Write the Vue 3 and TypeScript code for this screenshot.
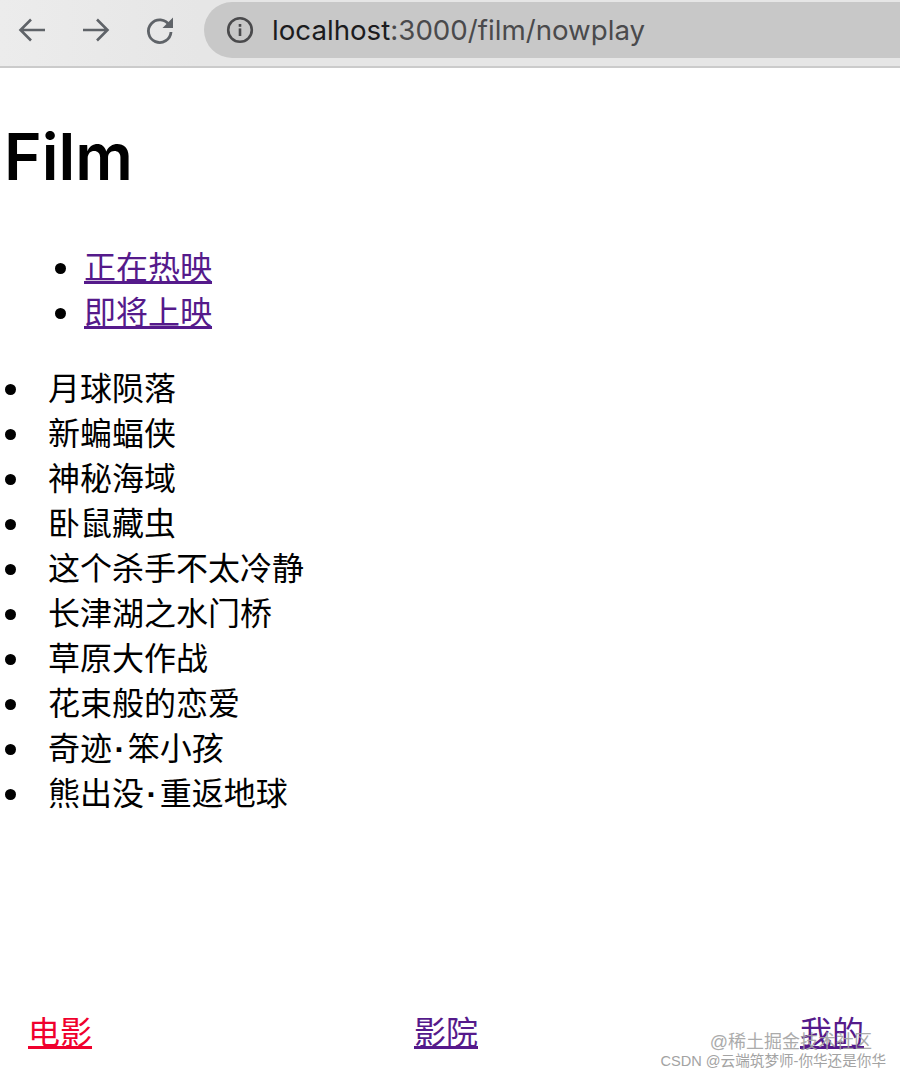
<script setup lang="ts">
const tabs: string[] = ['正在热映', '即将上映']
const films: string[][] = ['月球陨落', '新蝙蝠侠', '神秘海域', '卧鼠藏虫', '这个杀手不太冷静', '长津湖之水门桥', '草原大作战', '花束般的恋爱', '奇迹·笨小孩', '熊出没·重返地球'].map((f) => f.split(/(·)/))
const navs: { label: string; active: boolean }[] = [
  { label: '电影', active: true },
  { label: '影院', active: false },
  { label: '我的', active: false },
]
</script>

<template>
  <div class="page">
    <header class="chrome">
      <svg class="ico" width="32" height="32" viewBox="0 0 32 32"><path d="M29 16H5M15 5.500 4.500 16 15 26.500" fill="none" stroke="#5f6368" stroke-width="2.600"/></svg>
      <svg class="ico fwd" width="32" height="32" viewBox="0 0 32 32"><path d="M3 16h24M17 5.500 27.500 16 17 26.500" fill="none" stroke="#5f6368" stroke-width="2.600"/></svg>
      <svg class="ico rel" width="32" height="32" viewBox="0 0 32 32"><path d="M25.500 11.500A11.300 11.300 0 1 0 27 18" fill="none" stroke="#5f6368" stroke-width="2.800"/><path d="M29 3.500V14H18.500z" fill="#5f6368"/></svg>
      <div class="omni">
        <svg width="28" height="28" viewBox="0 0 28 28"><circle cx="14" cy="14" r="11.800" fill="none" stroke="#4a4a4c" stroke-width="2.600"/><rect x="12.700" y="12.400" width="2.600" height="7.600" fill="#4a4a4c"/><rect x="12.700" y="8" width="2.600" height="2.800" fill="#4a4a4c"/></svg>
        <span class="url"><span class="host">localhost</span>:3000/film/nowplay</span>
      </div>
    </header>

    <main class="content">
      <h1 class="title">Film</h1>
      <ul class="tabs">
        <li v-for="t in tabs" :key="t"><a href="#" class="link">{{ t }}</a></li>
      </ul>
      <ul class="films">
        <li v-for="f in films" :key="f.join('')"><template v-for="(part, i) in f" :key="i"><span v-if="part === '·'" class="dot">{{ part }}</span><template v-else>{{ part }}</template></template></li>
      </ul>
    </main>

    <nav class="bottom">
      <a v-for="n in navs" :key="n.label" href="#" class="link" :class="{ active: n.active }">{{ n.label }}</a>
    </nav>

    <div class="mark">
      <div class="m1">@稀土掘金技术社区</div>
      <div class="m2">CSDN @云端筑梦师-你华还是你华</div>
    </div>
  </div>
</template>

<style>
html, body { margin: 0; background: #fff; }
</style>

<style scoped>
.page {
  position: relative;
  height: 1078px;
  overflow: hidden;
  display: flex;
  flex-direction: column;
  font-family: "Liberation Sans", "Noto Sans CJK SC", sans-serif;
  font-size: 32px;
  line-height: 45px;
  color: #000;
}
.chrome {
  box-sizing: border-box;
  height: 68px;
  flex: none;
  display: flex;
  align-items: center;
  background: linear-gradient(90deg, #ececec, #e6e6e6 200px);
  border-bottom: 2px solid #cbcbcb;
  padding: 0 0 6px 16px;
}
.ico { flex: none; }
.fwd { margin-left: 32px; }
.rel { margin-left: 32px; }
.omni {
  margin-left: 28px;
  flex: 1;
  height: 56px;
  background: #c8c8c8;
  border-radius: 28px 0 0 28px;
  display: flex;
  align-items: center;
  padding-left: 22px;
  gap: 18px;
}
.url {
  font-family: Inter, "Liberation Sans", sans-serif;
  font-size: 27.700px;
  line-height: 34px;
  color: #4a4a4c;
  white-space: nowrap;
}
.host { color: #1c1c1e; }
.content { flex: 1; }
.title {
  margin: 44px 0 0 4px;
  font-family: Inter, "Liberation Sans", sans-serif;
  font-size: 64px;
  line-height: 90px;
  font-weight: 600;
}
.tabs {
  margin: 44px 0 0;
  padding: 0 0 0 84px;
  list-style: none;
}
.tabs li, .films li { height: 45px; position: relative; }
.tabs li::before, .films li::before {
  content: "";
  position: absolute;
  top: 17px;
  width: 11px;
  height: 11px;
  border-radius: 50%;
  background: #000;
}
.tabs li::before { left: -29px; }
.films li::before { left: -43px; }
.films {
  margin: 31px 0 0;
  padding: 0 0 0 48px;
  list-style: none;
}
.dot { padding: 0 2.500px; font-weight: 700; }
.link { color: #551a8b; text-decoration: underline; }
.link.active { color: #f0002d; }
.bottom {
  flex: none;
  display: flex;
  justify-content: space-between;
  padding: 0 36px 22px 28px;
}
.mark {
  position: absolute;
  right: 14px;
  bottom: 9px;
  text-align: right;
  color: #a3a3a3;
  line-height: 1;
}
.m1 { font-size: 18px; margin: 0 14px 3px 0; opacity: 0.9; }
.m2 { font-size: 14.600px; }
</style>
